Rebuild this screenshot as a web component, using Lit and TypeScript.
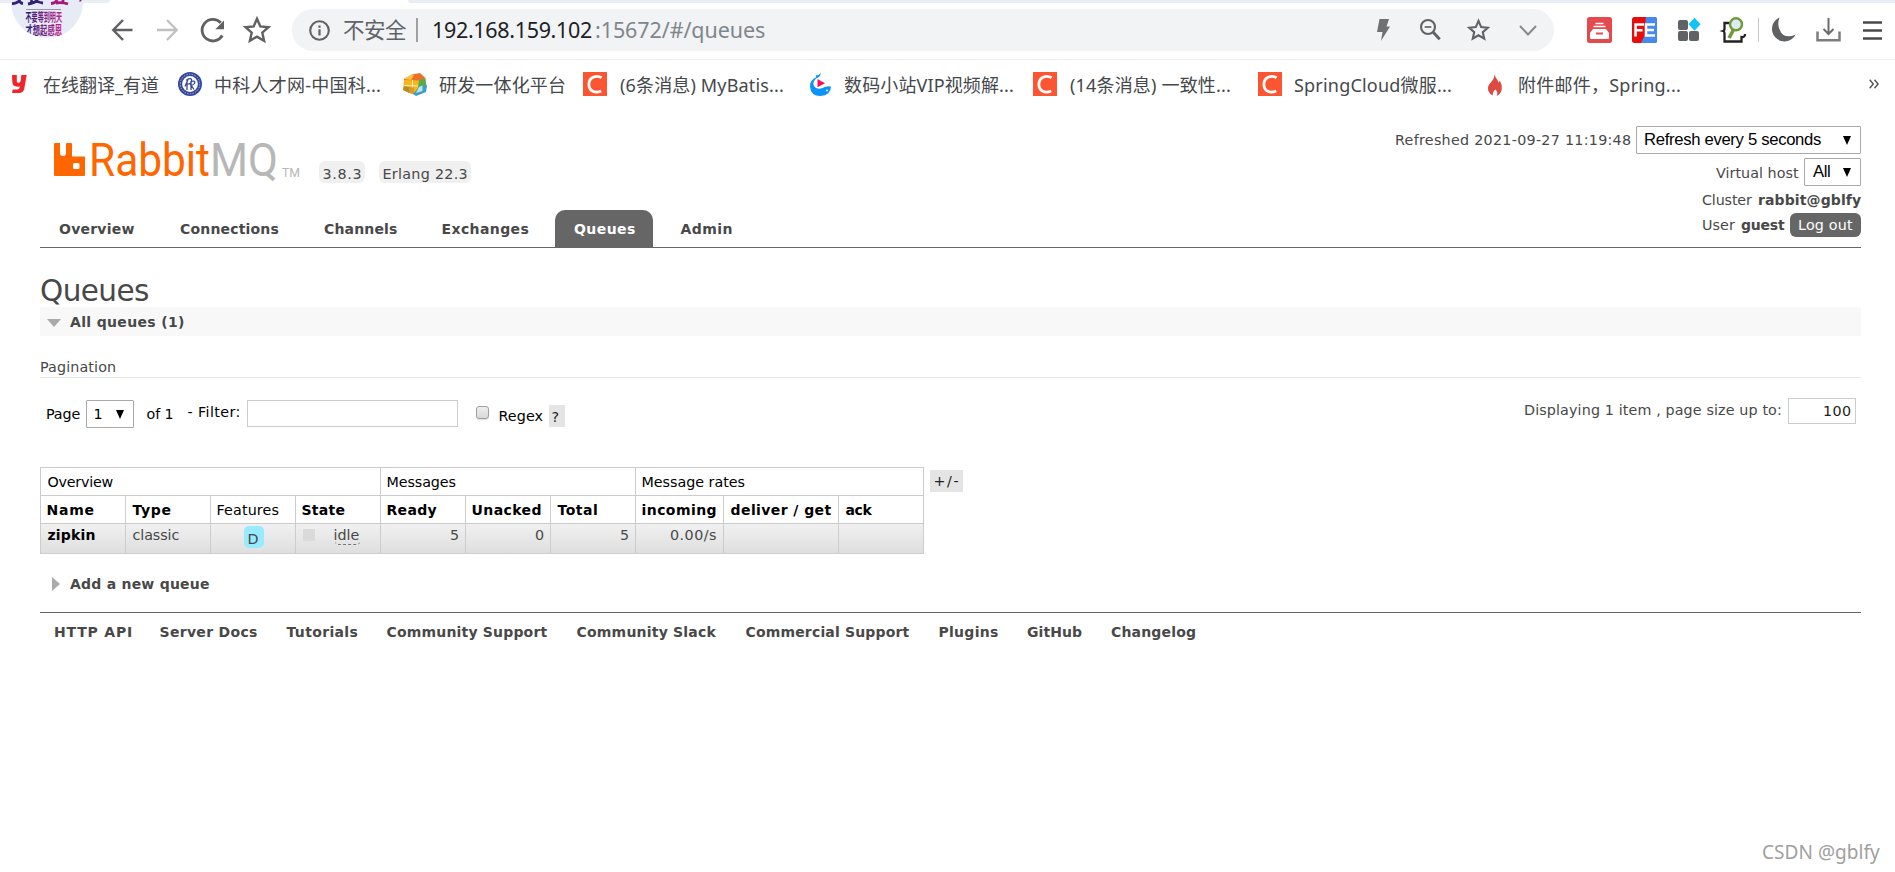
import { LitElement, html, svg, css } from "lit";
import { customElement } from "lit/decorators.js";

const FONTS: Record<string, string> = {
  ui: '14.3px "DejaVu Sans", sans-serif',
  strong: 'bold 14px "DejaVu Sans", sans-serif',
  title: '29.500px "DejaVu Sans", sans-serif',
  control: '16.67px "Liberation Sans", sans-serif',
  link: '18px "Noto Sans", "Noto Sans CJK SC", sans-serif',
  url: '21.5px "Noto Sans", "Noto Sans CJK SC", sans-serif',
  sig: '19px "Noto Sans", sans-serif',
};

const pen = document.createElement("canvas").getContext("2d")!;

/** A label whose tracking is computed so that its ink fills the given width. */
function fit(font: string, text: string, width: number, cls = "") {
  pen.font = FONTS[font];
  const m = pen.measureText(text);
  const ink = m.actualBoundingBoxLeft + m.actualBoundingBoxRight;
  const gaps = Math.max(1, [...text].length - 1);
  const track = text.length > 1 ? (width - ink) / gaps : 0;
  return html`<span
    class="t ${font} ${cls}"
    style="width:${width}px;letter-spacing:${track.toFixed(3)}px;text-indent:${m.actualBoundingBoxLeft.toFixed(2)}px"
    >${text}</span
  >`;
}

const star = svg`<path d="M13 1.8l3.3 7.6 8.2.8-6.2 5.500 1.800 8.100L13 19.600l-7.100 4.200 1.800-8.100-6.200-5.500 8.200-.8z" fill="none"/>`;

const csdn = html`<svg class="i24" viewBox="0 0 24 24">
  <rect width="24" height="24" fill="#fc5531" />
  <path d="M18.600 5.700C14 2.900 6.200 4.500 5.900 12c-.1 7.500 6.500 9.800 12.300 6.900" fill="none" stroke="#fff" stroke-width="2.800" />
</svg>`;

const youdao = html`<svg class="i24" viewBox="0 0 24 24">
  <path d="M0 3h4.800v6.400q0 1.600 2.200 1.300 1.200-.2 1.600-1.800L9.400 3h5.300L12.300 16.500Q11.400 21 6.600 21H.1l.6-3.500h4.600q2.200 0 2.500-3Q.3 15.500.3 9.800z" fill="#f0242b" />
</svg>`;

const seal = html`<svg class="i24" viewBox="0 0 24 24">
  <circle cx="12" cy="12" r="12" fill="#33479c" />
  <circle cx="12" cy="12" r="9.800" fill="none" stroke="#a9b4dc" stroke-width="1" stroke-dasharray="1.500 1.300" />
  <circle cx="12" cy="12" r="7.900" fill="#fff" />
  <path d="M9 18V7.500q5-2.500 4.600 1.500-.3 3-4.600 3.200M13 18V9.500q5.200-1.500 3.500 2-1.200 1.800-3.500 1.500l3 4.500M7 14.500l3-7" fill="none" stroke="#33479c" stroke-width="1.300" />
</svg>`;

const cube = html`<svg class="i24" viewBox="0 0 24 24">
  <path d="M1 7l8-4.500L17 1l5.500 5-6.500 3.500L1 10z" fill="#ed6f2d" />
  <path d="M1 7l7-4.500 3 .5-3 5z" fill="#f6c63b" />
  <path d="M1 8l15 .5V19l-7 3-9-4z" fill="#f8b718" />
  <path d="M1 14l5 1v6l-6-3z" fill="#b98b2c" />
  <path d="M6 15l5-.5V22l-5-1z" fill="#d99a23" />
  <path d="M9.500 8v7.500M1 13.500l15 .5" stroke="#fdf0c0" stroke-width="1" />
  <path d="M16 8.500L22.500 6l1 10L14 22z" fill="#5da84a" />
  <path d="M16 15l8-2-1 7-10 4-3-2z" fill="#3a9fc6" />
  <path d="M16 15l3.500-1.500V19L13 21z" fill="#bfe4ef" />
</svg>`;

const whale = html`<svg class="i24" viewBox="0 0 24 24">
  <path d="M10.800.3q-.5 2.200-2.800 3L5.800 3.200q.5 1 .3 2Q-.2 8 0 14.500.5 24 10.500 24 20.800 23.500 21 14.500q-4.500-.8-8.500 1.500-3.500 1.500-6.800-.2Q2.500 13.500 3.800 9.500 5.200 6 9 5q2-2 1.800-4.700z" fill="#0c93f5" />
  <path d="M7.500 7l7.500 4.200-7.500 4z" fill="#f5115f" />
  <circle cx="17" cy="18.500" r=".9" fill="#fff" />
</svg>`;

const flame = html`<svg class="i24" viewBox="0 0 24 24">
  <path d="M7.500.3q-.5 3.500 2.800 7.400 1 1.300 1.300 3l1.200-2.200q2.200 4 2 8-.5 5.500-5 7.500 1.500-4-1.500-6.500Q6 19 5.600 23.500.5 20.500 1 15.500q.4-2.800 3-5.200Q8 6 7.500.3z" fill="#dd4a41" />
</svg>`;

const bookmarks = [
  { icon: youdao, text: "在线翻译_有道", pad: 12, start: 31, width: 116 },
  { icon: seal, text: "中科人才网-中国科...", pad: 19, start: 37, width: 165 },
  { icon: cube, text: "研发一体化平台", pad: 23, start: 36, width: 126 },
  { icon: csdn, text: "(6条消息) MyBatis...", pad: 18, start: 37, width: 163 },
  { icon: whale, text: "数码小站VIP视频解...", pad: 27, start: 34, width: 169 },
  { icon: csdn, text: "(14条消息) 一致性...", pad: 20, start: 37, width: 160 },
  { icon: csdn, text: "SpringCloud微服...", pad: 28, start: 36, width: 157 },
  { icon: flame, text: "附件邮件，Spring...", pad: 36, start: 32, width: 161 },
];

@customElement("browser-chrome")
export class BrowserChrome extends LitElement {
  static styles = css`
    :host { display: block; height: 110px; background: #fff; }
    .t { display: inline-block; white-space: pre; flex: none; }
    .link { font: 18px "Noto Sans", "Noto Sans CJK SC", sans-serif; color: #45484b; line-height: 26px; padding-top: 2px; }
    .url { font: 21.5px "Noto Sans", "Noto Sans CJK SC", sans-serif; line-height: 30px; }
    svg { display: block; flex: none; overflow: visible; }
    .i24 { width: 24px; height: 24px; }
    .bar { position: relative; display: flex; height: 59px; border-bottom: 1px solid #eceef0;
      background: linear-gradient(#e9edf4 3px, #fff 3px); }
    .tab { position: absolute; left: 109px; top: 0; width: 300px; height: 3px; background: #fff; border-radius: 3px 3px 0 0; }
    .face { position: absolute; left: 11px; top: 0; width: 72px; height: 39px; }
    .tools { display: flex; align-items: center; width: 292px; height: 42px; margin-top: 9px; box-sizing: border-box; padding-left: 111px; }
    .tools svg:nth-child(2) { margin-left: 22px; }
    .tools svg:nth-child(3) { margin-left: 21px; }
    .tools svg:nth-child(4) { margin-left: 19px; }
    .pill { display: flex; align-items: center; box-sizing: border-box; width: 1262px; height: 42px; margin-top: 9px;
      padding-left: 17px; border-radius: 21px; background: #f1f3f4; }
    .muted { color: #5f6368; margin-left: 13px; }
    .rule { width: 2px; height: 24px; margin: 0 15px 0 10px; background: #9da1a5; }
    .host { color: #202124; }
    .path { color: #80868b; margin-left: 4px; }
    .in { display: flex; align-items: center; margin-left: auto; padding-right: 17px; }
    .zoom { margin-left: 30px; }
    .fav { margin-left: 27px; }
    .chev { margin-left: 30px; }
    .ext { display: flex; align-items: center; height: 42px; margin-top: 9px; padding-left: 33px; }
    .g20 { margin-left: 20px; }
    .g22 { margin-left: 22px; }
    .thin { width: 1px; height: 24px; background: #c8cacc; margin: 0 12px; }
    .marks { display: flex; align-items: center; height: 48px; }
    .mark { display: flex; align-items: center; }
    .more { margin-left: auto; margin-right: 16px; }
  `;
  render() {
    return html`
      <div class="bar">
        <div class="tab"></div>
        <svg class="face" viewBox="0 0 72 39">
          <defs>
            <clipPath id="c"><circle cx="36" cy="2" r="36" /></clipPath>
            <linearGradient id="g"><stop offset="0" stop-color="#2c1d78" /><stop offset="1" stop-color="#c0248c" /></linearGradient>
          </defs>
          <g clip-path="url(#c)">
            <rect width="72" height="39" fill="#e6ebf5" />
            <path d="M1 3.500q5 .5 8-3.500M8 0q1 3 4 3.500M20 0l2 4M17 4q7-1 10-4M24 0q4 3 8 3" stroke="#33207c" stroke-width="2.800" fill="none" />
            <path d="M40 3.500q5-.5 6-3.500M45 3q6-1 12 1M52 0v3M69 0l1 1" stroke="#a5187c" stroke-width="2.800" fill="none" />
            <path d="M15 9.500h35" stroke="#9b90ad" stroke-width="1" />
            <g fill="url(#g)" font-family="Noto Sans CJK SC, sans-serif" font-weight="700" font-size="12">
              <text x="14.500" y="21.500" textLength="36.500" lengthAdjust="spacingAndGlyphs">不要等到明天</text>
              <text x="14.500" y="34.500" textLength="36.500" lengthAdjust="spacingAndGlyphs">才想起感恩</text>
            </g>
          </g>
        </svg>
        <div class="tools">
          <svg width="23" height="24" viewBox="0 0 23 24"><path d="M21.500 12H2.500M12 2L2.300 12l9.700 10" fill="none" stroke="#5f6163" stroke-width="2.500" /></svg>
          <svg width="23" height="24" viewBox="0 0 23 24"><path d="M1 12h19.500M11 2l9.700 10L11 22" fill="none" stroke="#bfc0c1" stroke-width="2.300" /></svg>
          <svg width="25" height="26" viewBox="0 0 25 26"><path d="M22.300 18.500A10.800 10.800 0 1 1 20.800 5.800" fill="none" stroke="#606163" stroke-width="2.800" /><path d="M24 3.500v8.700h-8.700z" fill="#606163" /></svg>
          <svg width="26" height="26" viewBox="0 0 26 26" stroke="#5f6163" stroke-width="2.400">${star}</svg>
        </div>
        <div class="pill">
          <svg width="21" height="21" viewBox="0 0 21 21"><circle cx="10.500" cy="10.500" r="9.300" fill="none" stroke="#5f6368" stroke-width="2.100" /><path d="M9.400 9.300h2.200v6.200H9.400zM9.400 5.500h2.200v2.300H9.400z" fill="#5f6368" /></svg>
          ${fit("url", "不安全", 63, "muted")}
          <div class="rule"></div>
          ${fit("url", "192.168.159.102", 159, "host")}${fit("url", ":15672/#/queues", 169, "path")}
          <div class="in">
            <svg width="13" height="22" viewBox="0 0 13 22"><path d="M2.500 0H12L9.500 7.500H13L4 22l1.500-9H0z" fill="#707172" /></svg>
            <svg class="zoom" width="21" height="22" viewBox="0 0 21 22"><circle cx="8" cy="8" r="7" fill="none" stroke="#5f6368" stroke-width="2.100" /><path d="M4.700 8h6.600" stroke="#5f6368" stroke-width="1.700" /><path d="M13 13l6.700 7.200" stroke="#5f6368" stroke-width="3" /></svg>
            <svg class="fav" width="21" height="22" viewBox="0 0 26 26" stroke="#5f6368" stroke-width="2.600">${star}</svg>
            <svg class="chev" width="18" height="11" viewBox="0 0 18 11"><path d="M1 1l8 8.500L17 1" fill="none" stroke="#86888b" stroke-width="1.900" /></svg>
          </div>
        </div>
        <div class="ext">
          <svg width="25" height="26" viewBox="0 0 25 26"><rect width="25" height="26" rx="2.500" fill="#e5484d" /><path d="M8.500 6.500h8M6.500 9.500h12" stroke="#fff" stroke-width="1.500" /><path d="M6 12h13l3 4v5q0 1-1 1H4q-1 0-1-1v-5z" fill="#fff" /><path d="M9 16.500h7" stroke="#e5484d" stroke-width="2" /></svg>
          <svg class="g20" width="25" height="26" viewBox="0 0 25 26"><rect width="25" height="26" rx="2.500" fill="#e80c0c" /><path d="M14 0h8.500q2.500 0 2.500 2.500v21q0 2.500-2.500 2.500H9l4-8V8z" fill="#438bee" /><path d="M12 7.500H3.600V19.500M3.600 13.300H10.500M23 7.500H14v11H23M14 13H22" fill="none" stroke="#fff" stroke-width="2.600" /></svg>
          <svg class="g20" width="23" height="24" viewBox="-1 0 23 24"><rect y="2" width="10" height="10" rx="2" fill="#5f6368" /><rect y="13" width="10" height="10" rx="2" fill="#5f6368" /><rect x="11" y="13" width="10" height="10" rx="2" fill="#5f6368" /><path d="M16.500-.3l6 6.500-6 6.500-6-6.500z" fill="#12c3f8" /></svg>
          <svg class="g22" width="24" height="26" viewBox="0 0 24 26"><path d="M7 6H2.500v6q0 1.500-1.500 2 1.500.5 1.500 2v8.500h17v-4.500q3.500.5 3.500-3" fill="none" stroke="#222" stroke-width="2.300" /><path d="M12 12L7 21" stroke="#6d9b35" stroke-width="3.600" /><circle cx="14" cy="7.300" r="6" fill="#dcebf6" stroke="#6d9b35" stroke-width="2.400" /></svg>
          <div class="thin"></div>
          <svg width="25" height="26" viewBox="0 0 25 26"><path d="M8.500.5A12.500 12.500 0 1 0 24.700 17.500Q15 22 10 15.500 5.500 8.500 8.500.5z" fill="#606163" /></svg>
          <svg class="g20" width="25" height="24" viewBox="0 0 25 24"><path d="M12.500 0v15M7.500 11l5 5 5-5" fill="none" stroke="#6b6c6e" stroke-width="2" /><path d="M1.500 13.500v8.700h22v-8.700" fill="none" stroke="#7c7d7f" stroke-width="2.500" /></svg>
          <svg class="g22" width="19" height="19" viewBox="0 0 19 19"><path d="M0 1.500h19M0 9.500h19M0 17.500h19" stroke="#48494b" stroke-width="2.400" /></svg>
        </div>
      </div>
      <div class="marks">
        ${bookmarks.map(
          (b) => html`<div class="mark" style="padding-left:${b.pad}px">
            <div style="width:${b.start}px">${b.icon}</div>
            ${fit("link", b.text, b.width)}
          </div>`
        )}
        <svg class="more" width="10" height="10" viewBox="0 0 10 10"><path d="M.7.700L4.300 5 .7 9.300M5.500.700L9.100 5 5.500 9.300" fill="none" stroke="#55585b" stroke-width="1.500" /></svg>
      </div>
    `;
  }
}

const tabs: [string, number, boolean?][] = [
  ["Overview", 75.5],
  ["Connections", 98.5],
  ["Channels", 73],
  ["Exchanges", 86],
  ["Queues", 61, true],
  ["Admin", 51],
];

const footer: [string, number, number][] = [
  ["HTTP API", 15, 76],
  ["Server Docs", 29.5, 96.5],
  ["Tutorials", 29.5, 71],
  ["Community Support", 29, 161],
  ["Community Slack", 29, 140],
  ["Commercial Support", 29, 164],
  ["Plugins", 30, 58.5],
  ["GitHub", 29, 55],
  ["Changelog", 29, 84],
];

@customElement("app-root")
export class AppRoot extends LitElement {
  static styles = css`
    :host { display: block; width: 1895px; height: 872px; overflow: hidden; position: relative; background: #fff; color: #484848; }
    .t { display: inline-block; white-space: pre; flex: none; }
    .ui { font: 14.3px "DejaVu Sans", sans-serif; line-height: 20px; }
    .strong { font: bold 14px "DejaVu Sans", sans-serif; line-height: 20px; }
    .title { font: 29.5px "DejaVu Sans", sans-serif; line-height: 36px; }
    .control { font: 16.67px "Liberation Sans", sans-serif; line-height: 26px; color: #000; }
    .sig { font: 19px "Noto Sans", sans-serif; line-height: 26px; color: #a0a0a0; }
    svg { display: block; flex: none; overflow: visible; }
    .page { padding: 0 34px 0 40px; }
    .row { display: flex; align-items: flex-start; }
    .head { height: 137px; border-bottom: 1px solid #666; justify-content: space-between; }
    .brand { height: 100px; padding-left: 14px; }
    .brand svg { margin-top: 33px; width: 246px; height: 36px; }
    .badge { display: flex; box-sizing: border-box; height: 22px; margin-top: 51px; padding: 3px 4.5px 0; background: #f0f0f0; border-radius: 6px; }
    .badge.v { margin-left: 19px; }
    .badge.e { margin-left: 14px; }
    .tabs { display: flex; gap: 8.5px; }
    .tab { box-sizing: border-box; height: 37px; padding: 9px 18px 0 19px; border-radius: 10px 10px 0 0; }
    .tab.on { background: #666; color: #fff; }
    .status { display: flex; flex-direction: column; align-items: flex-end; padding-top: 16px; }
    .line { display: flex; align-items: flex-start; height: 32px; }
    .line.cluster { height: 23px; gap: 7px; }
    .line.user { height: 24px; }
    .who { display: flex; gap: 6px; padding-top: 2px; }
    .drop4 { padding-top: 4px; }
    .drop5 { padding-top: 5px; }
    .sel { display: flex; align-items: center; box-sizing: border-box; height: 28px; border: 1px solid #a9a9a9; border-radius: 1px; background: #fff;
      padding: 0 9px 0 8px; justify-content: space-between; margin-left: 5px; }
    .sel.rate { width: 225px; }
    .sel.host { width: 57px; }
    .sel.pg { width: 48px; margin-top: 2px; }
    .out { box-sizing: border-box; height: 24px; margin-left: 5px; padding: 2px 8px 0 9px; background: #666; color: #fff; border-radius: 6px; }
    .h1 { display: flex; height: 59px; box-sizing: border-box; padding: 25px 0 0 1px; }
    .bar { display: flex; height: 29px; align-items: center; background: #f8f8f8; padding-left: 7px; margin-bottom: 21px; }
    .bar svg { margin: 3px 9px 0 0; }
    .sub { height: 20px; border-bottom: 1px solid #e4e4e4; padding-left: 1px; display: flex; }
    .filter { height: 89px; box-sizing: border-box; padding: 20px 5px 0 7px; color: #000; }
    .page-label { padding-top: 6px; }
    .of { padding: 6px 0 0 13px; }
    .flabel { padding: 4px 0 0 15px; }
    .regex { padding-top: 8px; }
    .shown { padding-top: 2px; }
    .box { box-sizing: border-box; height: 27px; border: 1px solid #ccc; }
    .search { width: 211px; margin: 2px 18px 0 7px; }
    .check { box-sizing: border-box; width: 13px; height: 13px; margin: 8px 11px 0 0; border: 1px solid #9f9f9f; border-radius: 3px;
      background: linear-gradient(#eee, #d9d9d9); box-shadow: 0 1px 1px #ddd; }
    .q { box-sizing: border-box; height: 22px; background: #e4e4e4; color: #222; padding: 2px 4px 0; margin: 7px 0 0 6px; }
    .q.pm { margin: 3px 0 0 6px; padding: 1px 4.5px 0; }
    .size { width: 68px; height: 26px; display: flex; justify-content: flex-end; padding: 2px 4px 0 0; margin-left: 7px; color: #222; }
    .grow { margin-left: auto; color: #484848; }
    .grid { border-collapse: collapse; table-layout: fixed; width: 884px; color: #000; }
    .grid th, .grid td { border: 1px solid #ccc; padding: 0 0 0 6.5px; text-align: left; vertical-align: top; font-size: 0; font-weight: 400; box-sizing: border-box; }
    .grid th { height: 28px; padding-top: 4px; }
    .grid td { height: 30px; padding-top: 1px; color: #484848; }
    .grid .data { background: linear-gradient(#f0f0f0, #dedede); }
    .grid td.num { text-align: right; padding-right: 7px; }
    .name { color: #000; }
    .durable { display: inline-block; width: 20px; height: 22px; box-sizing: border-box; margin: 1px 0 0 26px; padding: 3px 0 0 5px; border-radius: 5px; background: #98ebff; }
    .sq { display: inline-block; width: 12px; height: 12px; background: #dadada; margin: 0 20px -1px 0; }
    .idle { border-bottom: 1px dashed #777; border-radius: 4px; height: 19px; }
    .add { height: 58px; box-sizing: border-box; padding: 20px 0 0 12px; }
    .add svg { margin: 3px 10px 0 0; }
    .foot { border-top: 1px solid #666; padding-top: 9px; }
    .sign { position: absolute; right: 15px; bottom: 7px; display: flex; }
  `;

  arrow() {
    return html`<svg width="8" height="9" viewBox="0 0 8 9"><path d="M0 0h8L4 9z" fill="#000" /></svg>`;
  }

  render() {
    const cols = [85, 85, 85, 85, 85, 85, 85, 88, 115, 85];
    const heads: [string, number][] = [
      ["Name", 46], ["Type", 38], ["Features", 61], ["State", 42], ["Ready", 49],
      ["Unacked", 68], ["Total", 39.5], ["incoming", 73], ["deliver / get", 101], ["ack", 27],
    ];
    return html`
      <browser-chrome></browser-chrome>
      <div class="page">
        <div class="row head">
          <div>
            <div class="row brand">
              <svg viewBox="0 0 246 36">
                <path d="M1 0h5v10q0 3 3 3t3-3V1q0-1 1-1h4q1 0 1 1v12.500h12.500q.5 0 .5.500V32q0 1-1 1H1q-1 0-1-1V1q0-1 1-1zM20.500 20q-1.500 0-1.500 1.500v3q0 1.500 1.500 1.500h3.500q1.500 0 1.500-1.500v-3q0-1.500-1.500-1.500z" fill="#f60" fill-rule="evenodd" />
                <g font-family="Roboto, sans-serif" font-size="46">
                  <text x="35" y="33" textLength="121" lengthAdjust="spacingAndGlyphs" fill="#f60">Rabbit</text>
                  <text x="156" y="33" textLength="68" lengthAdjust="spacingAndGlyphs" fill="#b7b7b7">MQ</text>
                  <text x="228" y="33.500" font-size="12.500" textLength="18" lengthAdjust="spacingAndGlyphs" fill="#b7b7b7">TM</text>
                </g>
              </svg>
              <div class="badge v">${fit("ui", "3.8.3", 37)}</div>
              <div class="badge e">${fit("ui", "Erlang 22.3", 83)}</div>
            </div>
            <div class="tabs">
              ${tabs.map(([t, w, on]) => html`<div class="tab ${on ? "on" : ""}">${fit("strong", t, w)}</div>`)}
            </div>
          </div>
          <div class="status">
            <div class="line">
              <div class="drop4">${fit("ui", "Refreshed 2021-09-27 11:19:48", 235)}</div>
              <div class="sel rate">${fit("control", "Refresh every 5 seconds", 176)}${this.arrow()}</div>
            </div>
            <div class="line">
              <div class="drop5">${fit("ui", "Virtual host", 83)}</div>
              <div class="sel host">${fit("control", "All", 17)}${this.arrow()}</div>
            </div>
            <div class="line cluster">${fit("ui", "Cluster", 50)}${fit("strong", "rabbit@gblfy", 102)}</div>
            <div class="line user">
              <div class="who">${fit("ui", "User", 32)}${fit("strong", "guest", 44)}</div>
              <div class="out">${fit("ui", "Log out", 54)}</div>
            </div>
          </div>
        </div>
        <div class="h1">${fit("title", "Queues", 107)}</div>
        <div class="bar">
          <svg width="14" height="8" viewBox="0 0 14 8"><path d="M0 0h14L7 8z" fill="#aaa" /></svg>
          ${fit("strong", "All queues (1)", 114)}
        </div>
        <div class="sub">${fit("ui", "Pagination", 74)}</div>
        <div class="row filter">
          <div class="page-label">${fit("ui", "Page", 33.5)}</div>
          <div class="sel pg">${fit("ui", "1", 7)}${this.arrow()}</div>
          <div class="of">${fit("ui", "of 1", 26)}</div>
          <div class="flabel">${fit("ui", "- Filter:", 52)}</div>
          <div class="box search"></div>
          <div class="check"></div>
          <div class="regex">${fit("ui", "Regex", 43)}</div>
          <div class="q">${fit("ui", "?", 8)}</div>
          <div class="grow row">
            <div class="shown">${fit("ui", "Displaying 1 item , page size up to:", 256)}</div>
            <div class="box size">${fit("ui", "100", 27)}</div>
          </div>
        </div>
        <div class="row">
          <table class="grid">
            <colgroup>${cols.map((w) => html`<col style="width:${w}px" />`)}</colgroup>
            <tr>
              <th colspan="4">${fit("ui", "Overview", 66)}</th>
              <th colspan="3">${fit("ui", "Messages", 68)}</th>
              <th colspan="3">${fit("ui", "Message rates", 102)}</th>
            </tr>
            <tr>${heads.map(([t, w]) => html`<th>${fit(t === "Features" ? "ui" : "strong", t, w)}</th>`)}</tr>
            <tr class="data">
              <td>${fit("strong", "zipkin", 47, "name")}</td>
              <td>${fit("ui", "classic", 46)}</td>
              <td><span class="durable">${fit("ui", "D", 10)}</span></td>
              <td><span class="sq"></span>${fit("ui", "idle", 25, "idle")}</td>
              <td class="num">${fit("ui", "5", 7)}</td>
              <td class="num">${fit("ui", "0", 8)}</td>
              <td class="num">${fit("ui", "5", 7)}</td>
              <td class="num">${fit("ui", "0.00/s", 46)}</td>
              <td></td>
              <td></td>
            </tr>
          </table>
          <div class="q pm">${fit("ui", "+/-", 24)}</div>
        </div>
        <div class="row add">
          <svg width="8" height="14" viewBox="0 0 8 14"><path d="M0 0l8 7-8 7z" fill="#aaa" /></svg>
          ${fit("strong", "Add a new queue", 139)}
        </div>
        <div class="row foot">
          ${footer.map(([t, gap, w]) => html`<div style="padding-left:${gap}px">${fit("strong", t, w)}</div>`)}
        </div>
      </div>
      <div class="sign">${fit("sig", "CSDN @gblfy", 117)}</div>
    `;
  }
}
